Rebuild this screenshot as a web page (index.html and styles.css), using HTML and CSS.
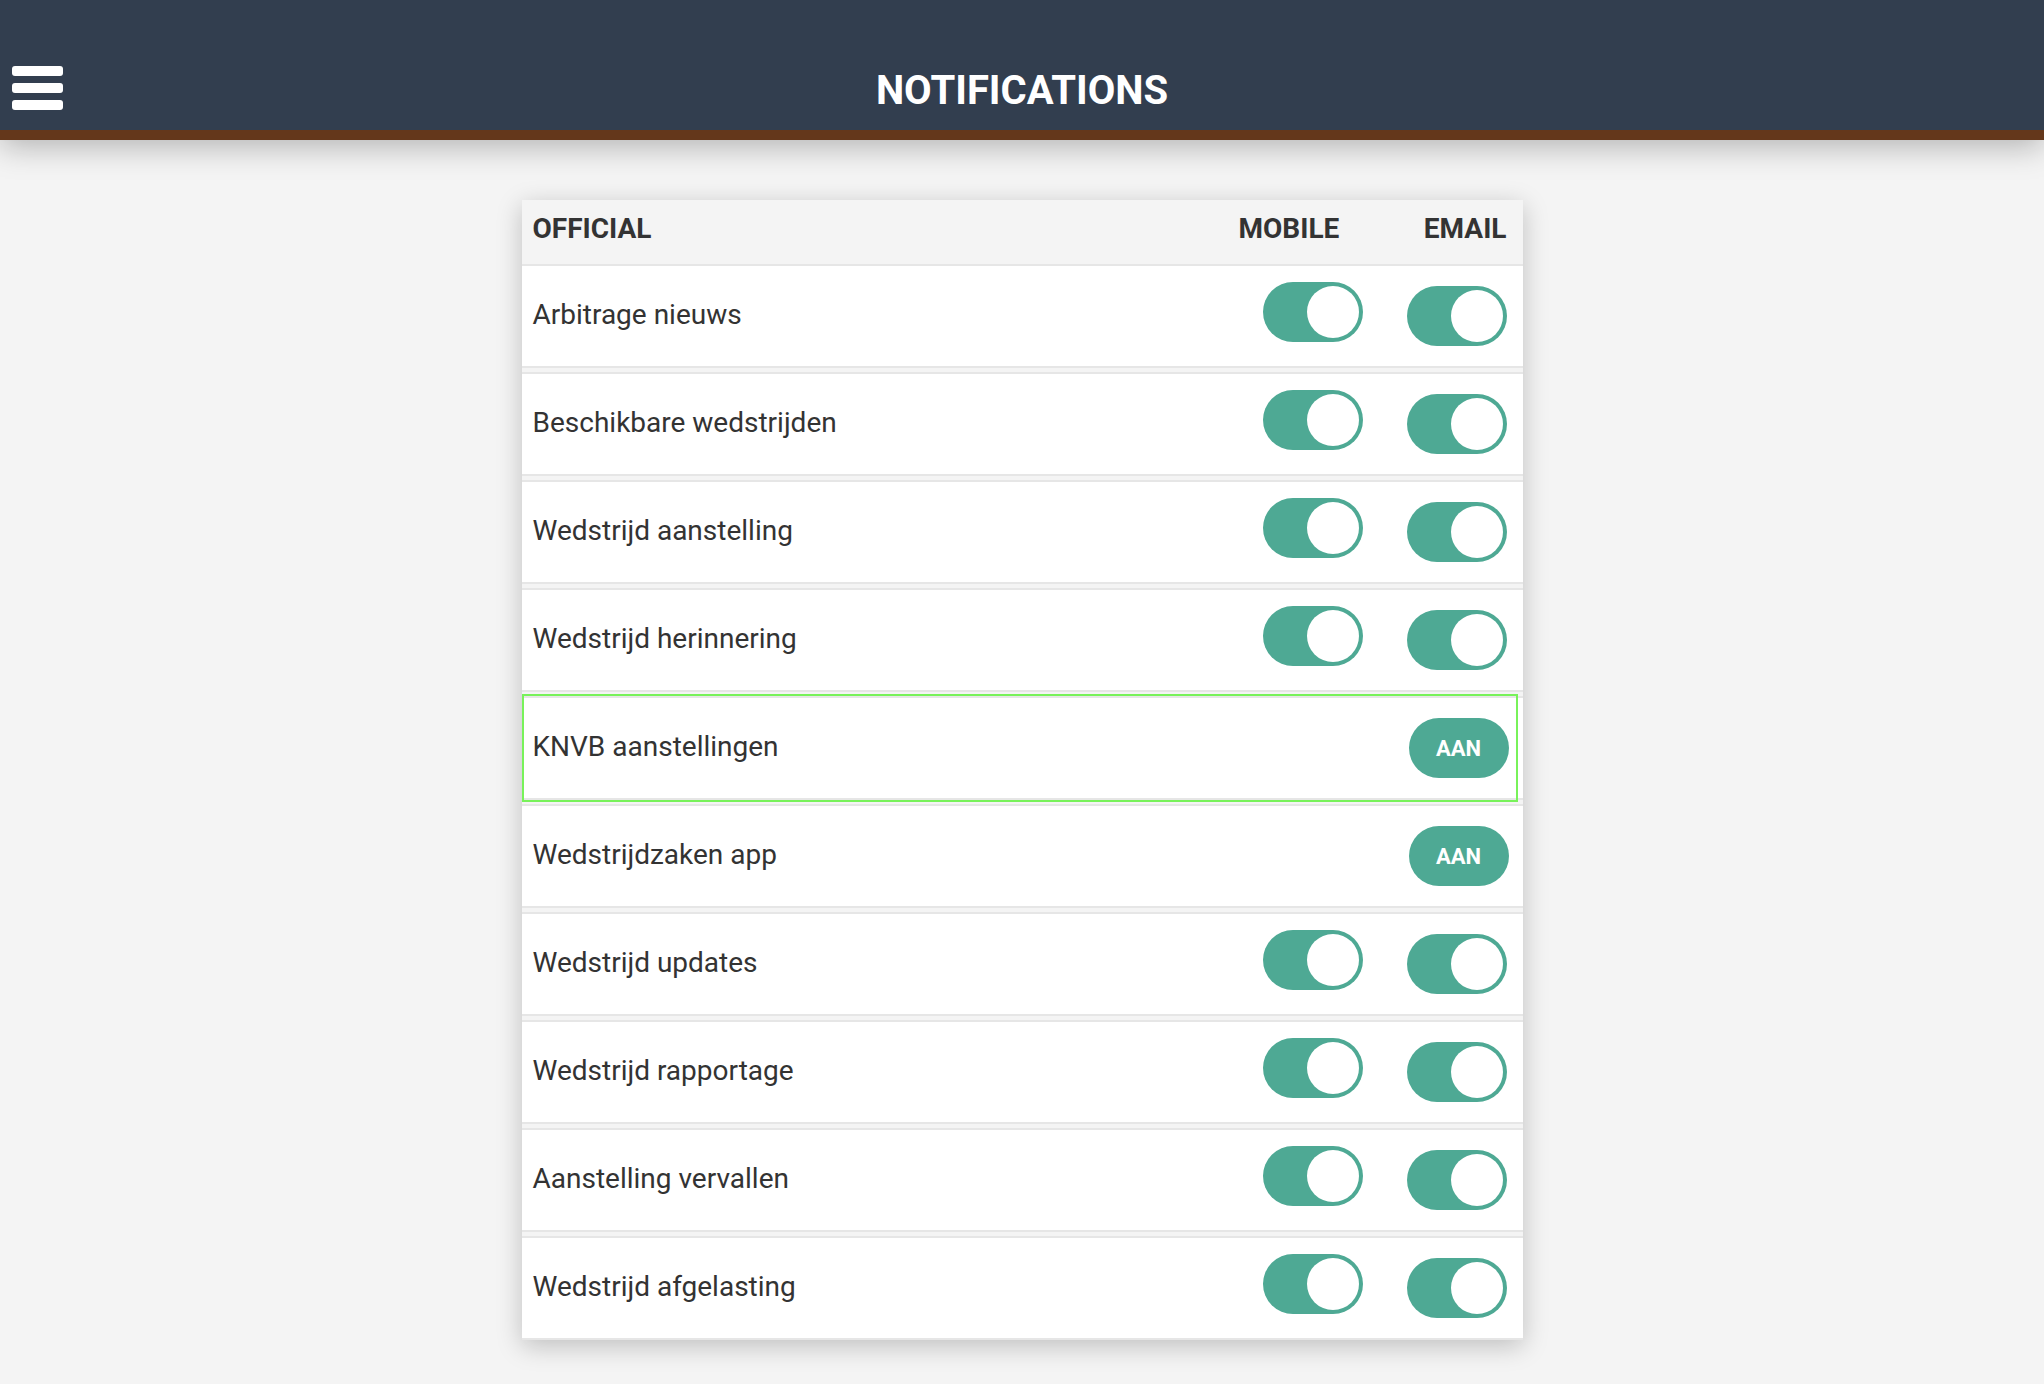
FILE: index.html
```html
<!DOCTYPE html>
<html lang="nl">
<head>
<meta charset="utf-8">
<title>Notifications</title>
<link rel="stylesheet" href="styles.css">
</head>
<body>
<header class="topbar">
  <div class="topbar-left">
    <button class="menu" aria-label="Menu"><span></span><span></span><span></span></button>
  </div>
  <h1 class="title">NOTIFICATIONS</h1>
  <div class="topbar-right"></div>
</header>
<main class="page">
  <section class="card">
    <div class="card-head">
      <span class="col-name">OFFICIAL</span>
      <span class="col-mobile">MOBILE</span>
      <span class="col-email">EMAIL</span>
    </div>
    <ul class="list">
      <li class="row"><span class="label">Arbitrage nieuws</span><span class="cell-mobile"><span class="toggle"></span></span><span class="cell-email"><span class="toggle"></span></span></li>
      <li class="row"><span class="label">Beschikbare wedstrijden</span><span class="cell-mobile"><span class="toggle"></span></span><span class="cell-email"><span class="toggle"></span></span></li>
      <li class="row"><span class="label">Wedstrijd aanstelling</span><span class="cell-mobile"><span class="toggle"></span></span><span class="cell-email"><span class="toggle"></span></span></li>
      <li class="row"><span class="label">Wedstrijd herinnering</span><span class="cell-mobile"><span class="toggle"></span></span><span class="cell-email"><span class="toggle"></span></span></li>
      <li class="row focused"><span class="label">KNVB aanstellingen</span><span class="cell-mobile"></span><span class="cell-email"><span class="pill">AAN</span></span></li>
      <li class="row"><span class="label">Wedstrijdzaken app</span><span class="cell-mobile"></span><span class="cell-email"><span class="pill">AAN</span></span></li>
      <li class="row"><span class="label">Wedstrijd updates</span><span class="cell-mobile"><span class="toggle"></span></span><span class="cell-email"><span class="toggle"></span></span></li>
      <li class="row"><span class="label">Wedstrijd rapportage</span><span class="cell-mobile"><span class="toggle"></span></span><span class="cell-email"><span class="toggle"></span></span></li>
      <li class="row"><span class="label">Aanstelling vervallen</span><span class="cell-mobile"><span class="toggle"></span></span><span class="cell-email"><span class="toggle"></span></span></li>
      <li class="row"><span class="label">Wedstrijd afgelasting</span><span class="cell-mobile"><span class="toggle"></span></span><span class="cell-email"><span class="toggle"></span></span></li>
    </ul>
  </section>
</main>
</body>
</html>
```
FILE: styles.css
```css
html, body {
  margin: 0;
  padding: 0;
}
body {
  background: #f4f4f4;
  font-family: Roboto, "Liberation Sans", Arial, sans-serif;
  color: #333333;
}

/* Top bar */
.topbar {
  display: grid;
  grid-template-columns: 1fr auto 1fr;
  align-items: center;
  box-sizing: content-box;
  height: 80px;
  padding-top: 50px;
  background: #323e4f;
  border-bottom: 10px solid #64371b;
  box-shadow: 0 6px 30px rgba(0, 0, 0, 0.28);
  position: relative;
  z-index: 2;
}
.topbar-left {
  display: flex;
  align-items: center;
  padding-left: 12px;
  margin-top: -4px;
}
.menu {
  display: flex;
  flex-direction: column;
  gap: 7px;
  padding: 0;
  margin: 0;
  border: 0;
  background: transparent;
  cursor: pointer;
}
.menu span {
  display: block;
  width: 51px;
  height: 10px;
  border-radius: 3px;
  background: #ffffff;
}
.title {
  margin: 0;
  font-size: 40px;
  font-weight: 700;
  color: #ffffff;
  line-height: normal;
}

/* Page */
.page {
  padding: 60px 0 40px;
}
.card {
  width: 1001px;
  margin: 0 auto;
  background: #f4f4f4;
  box-shadow: 0 6px 24px rgba(0, 0, 0, 0.22);
}
.card-head {
  display: flex;
  align-items: center;
  height: 64px;
  box-sizing: border-box;
  padding: 0 16px 8px 11px;
  font-size: 28px;
  font-weight: 700;
  color: #333333;
}
.col-name {
  flex: 1;
}
.col-mobile {
  width: 100px;
  text-align: right;
  margin-right: 68px;
}
.col-email {
  width: 100px;
  text-align: right;
}

.list {
  list-style: none;
  margin: 0;
  padding: 0;
}
.row {
  display: flex;
  align-items: center;
  height: 100px;
  padding: 0 16px 0 11px;
  background: #ffffff;
  border-top: 2px solid #e6e6e6;
  border-bottom: 2px solid #e6e6e6;
  margin-bottom: 4px;
}
.row:last-child {
  margin-bottom: 0;
}
.row.focused {
  position: relative;
}
.row.focused::before {
  content: "";
  position: absolute;
  left: 0;
  right: 5px;
  top: -4px;
  bottom: -4px;
  border: 2px solid #78f25a;
  pointer-events: none;
}
.label {
  flex: 1;
  font-size: 28px;
  color: #333333;
  padding-bottom: 4px;
}
.cell-mobile {
  width: 100px;
  margin-right: 44px;
  display: flex;
  justify-content: flex-end;
}
.cell-mobile .toggle {
  margin-bottom: 8px;
}
.cell-email {
  width: 100px;
  display: flex;
  justify-content: flex-end;
}

.toggle {
  display: block;
  position: relative;
  width: 100px;
  height: 60px;
  border-radius: 30px;
  background: #4ea994;
}
.toggle::after {
  content: "";
  position: absolute;
  top: 4px;
  right: 4px;
  width: 52px;
  height: 52px;
  border-radius: 50%;
  background: #ffffff;
}

.pill {
  display: flex;
  align-items: center;
  justify-content: center;
  width: 100px;
  height: 60px;
  margin-right: -2px;
  border-radius: 30px;
  background: #4ea994;
  color: #ffffff;
  font-size: 22px;
  font-weight: 700;
}
```
